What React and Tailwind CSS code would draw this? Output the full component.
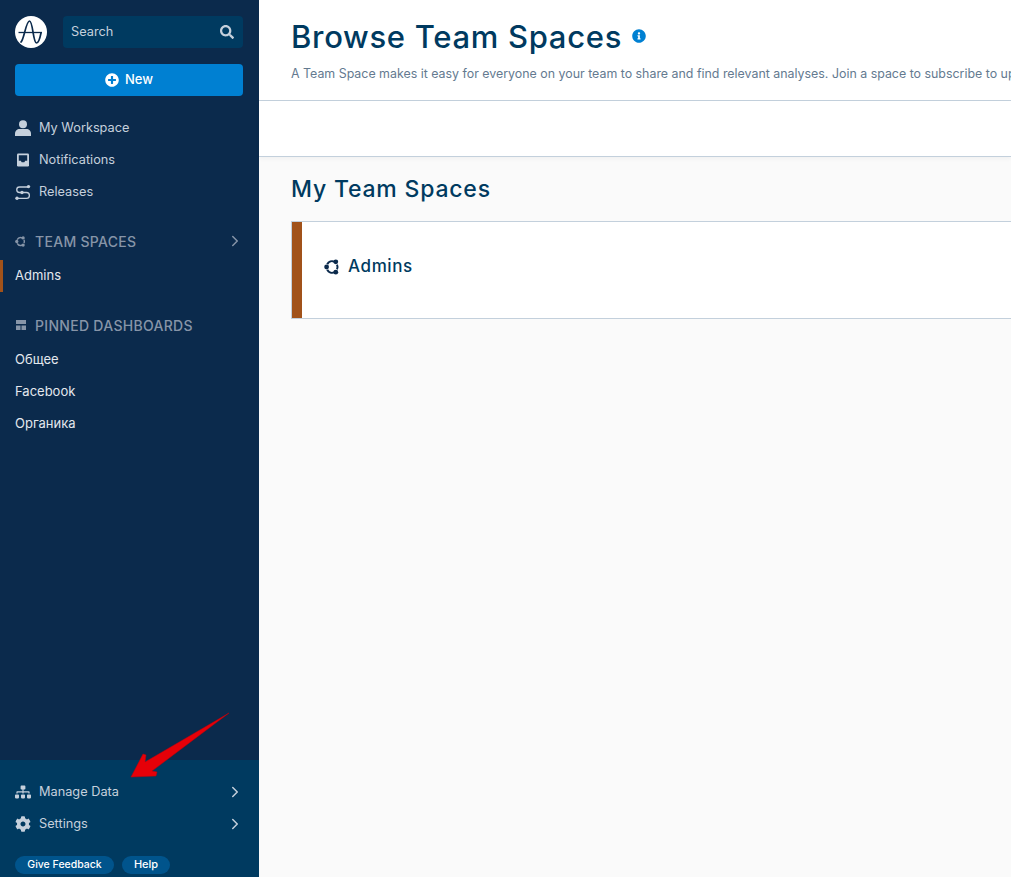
import React from 'react';
import { ChevronRight } from 'lucide-react';
import { FaSearch, FaPlusCircle, FaSitemap, FaCog, FaInfoCircle } from 'react-icons/fa';

function Logo() {
  return (
    <svg width="32" height="32" viewBox="0 0 32 32" className="shrink-0">
      <circle cx="16" cy="16" r="16" fill="#fff" />
      <path d="M3.500 16.500H27" stroke="#0b2a4c" strokeWidth="1.300" fill="none" />
      <path d="M6 26C9 24 11 5 14.500 5C18 5 18 27 21.500 27C23.500 27 25 22 26 17" stroke="#0b2a4c" strokeWidth="1.700" fill="none" strokeLinecap="round" />
    </svg>
  );
}

function TeamIcon({ size = 16, color = '#0b2a4c' }) {
  return (
    <svg width={size} height={size} viewBox="0 0 16 16" className="shrink-0">
      <path d="M3.200 5.200A5.600 5.600 0 0 1 10.500 2.800M13 5.600A5.600 5.600 0 0 1 13 10.400M10.500 13.200A5.600 5.600 0 0 1 3.200 10.800" stroke={color} strokeWidth="2" fill="none" />
      <circle cx="2.600" cy="8" r="2.400" fill={color} />
      <circle cx="11.800" cy="2.800" r="2.400" fill={color} />
      <circle cx="11.800" cy="13.200" r="2.400" fill={color} />
    </svg>
  );
}

function UserIcon() {
  return (
    <svg width="16" height="16" viewBox="0 0 16 16" className="shrink-0" fill="#c5d0dc">
      <circle cx="8" cy="4.200" r="4" />
      <path d="M0 16V13.500C0 10.800 2.200 9 4.500 9H11.500C13.800 9 16 10.800 16 13.500V16Z" />
    </svg>
  );
}

function InboxIcon() {
  return (
    <svg width="16" height="16" viewBox="0 0 16 16" className="shrink-0">
      <rect x="2" y="1.500" width="12" height="13" rx="1.200" fill="#c5d0dc" />
      <path d="M3.800 3.200H12.200V8.800H10.200L9.300 10.300H6.700L5.800 8.800H3.800Z" fill="#0b2a4c" />
    </svg>
  );
}

function ReleasesIcon() {
  return (
    <svg width="16" height="16" viewBox="0 0 16 16" className="shrink-0" fill="none" stroke="#c5d0dc" strokeWidth="1.300">
      <path d="M13.500 3H4.500a2.750 2.750 0 0 0 0 5.500h7a2.900 2.900 0 0 1 0 5.800H2" />
      <circle cx="13.500" cy="2.600" r="1.700" fill="#c5d0dc" stroke="none" />
      <circle cx="7" cy="8.500" r="1.700" fill="#c5d0dc" stroke="none" />
      <circle cx="2" cy="14.300" r="1.700" fill="#c5d0dc" stroke="none" />
    </svg>
  );
}

function PinnedIcon() {
  return (
    <svg width="12" height="12" viewBox="0 0 12 12" className="shrink-0" fill="#8795a8">
      <rect x="1" y="1" width="10" height="4" />
      <rect x="1" y="6.500" width="4.500" height="4.500" />
      <rect x="6.500" y="6.500" width="4.500" height="4.500" />
    </svg>
  );
}

function NavRow({ icon, label, chevron }) {
  return (
    <div className="flex h-8 items-center pl-[15px] pr-[15px] text-[12.750px] text-[#c5d0dc]">
      <span className="flex w-6 items-center">{icon}</span>
      <span>{label}</span>
      {chevron && <ChevronRight size={18} className="ml-auto text-[#c5d0dc]" />}
    </div>
  );
}

function SectionTitle({ icon, label, chevron }) {
  return (
    <div className="flex h-8 items-center pl-[15px] pr-[15px] text-[14px] font-medium tracking-[0.3px] text-[#8795a8]">
      <span className="flex w-5 items-center">{icon}</span>
      <span>{label}</span>
      {chevron && <ChevronRight size={18} className="ml-auto text-[#8795a8]" />}
    </div>
  );
}

function SubRow({ label, active }) {
  return (
    <div className="flex h-8 items-center text-[13px] text-[#e3e8ee]">
      <span className={active ? 'h-8 w-[3px] bg-[#a1521a]' : 'h-8 w-[3px]'} />
      <span className="pl-3">{label}</span>
    </div>
  );
}

export default function App() {
  return (
    <div className="relative flex h-[877px] w-full overflow-hidden bg-[#fafafa] font-['Inter',sans-serif]">
      {/* Sidebar */}
      <aside className="flex w-[259px] shrink-0 flex-col bg-[#0b2a4c]">
        <div className="flex items-center gap-4 pl-[15px] pr-4 pt-4">
          <Logo />
          <div className="flex h-8 flex-1 items-center justify-between rounded-sm bg-[#003a60] pl-2 pr-[9px] text-[12.750px] text-[#c5d0dc]">
            <span>Search</span>
            <FaSearch size={14} />
          </div>
        </div>
        <div className="pl-[15px] pr-4 pt-4">
          <button className="flex h-8 w-full items-center justify-center gap-[6px] rounded-sm bg-[#0080d2] text-[13px] font-medium text-white">
            <FaPlusCircle size={14} />
            New
          </button>
        </div>

        <nav className="pt-4">
          <NavRow icon={<UserIcon />} label="My Workspace" />
          <NavRow icon={<InboxIcon />} label="Notifications" />
          <NavRow icon={<ReleasesIcon />} label="Releases" />
        </nav>

        <div className="pt-[17px]">
          <SectionTitle icon={<TeamIcon size={11} color="#8795a8" />} label="TEAM SPACES" chevron />
          <div className="pt-[3px]">
            <SubRow label="Admins" active />
          </div>
        </div>

        <div className="pt-[17px]">
          <SectionTitle icon={<PinnedIcon />} label="PINNED DASHBOARDS" />
          <div className="pt-[3px]">
            <SubRow label="Общее" />
            <SubRow label="Facebook" />
            <SubRow label="Органика" />
          </div>
        </div>

        <div className="mt-auto h-[117px] bg-[#003a60] pt-4">
          <NavRow icon={<FaSitemap size={16} color="#c5d0dc" />} label="Manage Data" chevron />
          <NavRow icon={<FaCog size={16} color="#c5d0dc" />} label="Settings" chevron />
          <div className="flex gap-2 px-[15px] pt-4">
            <span className="flex h-[18px] w-[99px] items-center justify-center rounded-full bg-[#00548c] pb-px text-[10.500px] font-medium text-white">Give Feedback</span>
            <span className="flex h-[18px] w-12 items-center justify-center rounded-full bg-[#00548c] pb-px text-[11px] font-medium text-white">Help</span>
          </div>
        </div>
      </aside>

      {/* Main */}
      <main className="flex min-w-0 flex-1 flex-col">
        <header className="h-[101px] overflow-hidden border-b border-[#c3d0dc] bg-white pl-8 pt-4">
          <div className="flex items-center gap-[10px]">
            <h1 className="whitespace-nowrap text-[31px] font-medium leading-[42px] tracking-[0.7px] text-[#003a60]">Browse Team Spaces</h1>
            <FaInfoCircle size={14} color="#0080d2" className="mb-[2px]" />
          </div>
          <p className="mt-[7px] whitespace-nowrap text-[12.400px] leading-[18px] text-[#647a90]">
            A Team Space makes it easy for everyone on your team to share and find relevant analyses. Join a space to subscribe to up
          </p>
        </header>
        <div className="h-[56px] border-b border-[#c3d0dc] bg-white shadow-[0_2px_4px_rgba(0,0,0,0.04)]" />

        <section className="pl-8 pt-4">
          <h2 className="whitespace-nowrap text-[23px] font-medium leading-[32px] tracking-[0.8px] text-[#003a60]">My Team Spaces</h2>
          <div className="mt-4 flex h-[98px] border-y border-l border-[#c3d0dc] bg-white">
            <div className="w-[10px] bg-[#a1521a]" />
            <div className="flex items-center gap-2 pb-[7px] pl-[22px]">
              <TeamIcon size={16} color="#0b2a4c" />
              <span className="text-[17px] font-medium tracking-[0.6px] text-[#003a60]">Admins</span>
            </div>
          </div>
        </section>
      </main>

      {/* Red annotation arrow */}
      <svg className="absolute left-[128px] top-[710px]" width="106" height="70" viewBox="0 0 106 70">
        <path d="M101 3L24 61L29 62L28 66L3 67L15 44L18 45L17 52Z" fill="#e60008" stroke="#c00008" strokeWidth="0.500" strokeLinejoin="round" />
      </svg>
    </div>
  );
}
